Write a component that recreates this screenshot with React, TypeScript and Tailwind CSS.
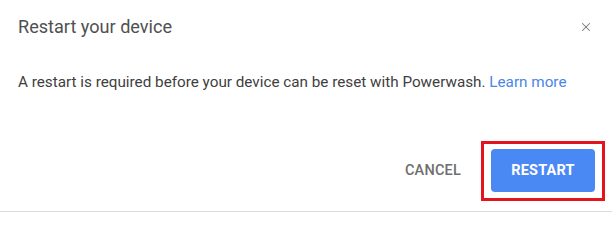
import { X } from "lucide-react";

export default function App() {
  return (
    <div className="w-[612px] h-[212px] bg-white flex flex-col border-b border-[#dcdcdc] font-['Roboto',_'Liberation_Sans',_sans-serif]">
      {/* Header */}
      <div className="flex items-center justify-between pl-[18px] pr-[19px] pt-[16px] h-[38px]">
        <h1 className="text-[18.1px] leading-5 text-[#505050]">Restart your device</h1>
        <X className="w-[14px] h-[14px] text-[#777777]" strokeWidth={1.8} />
      </div>

      {/* Body */}
      <p className="mt-[34px] pl-[18px] text-[15.25px] leading-5 text-[#404040]">
        A restart is required before your device can be reset with Powerwash.{" "}
        <span className="text-[#4a85e8]">Learn more</span>
      </p>

      {/* Footer */}
      <div className="mt-auto mb-[10px] flex items-center justify-end pr-[7px]">
        <button className="text-[14.5px] font-medium tracking-[0.2px] text-[#6e6e6e] mr-[20px]">
          CANCEL
        </button>
        <div className="border-[3px] border-[#e3141e] px-[7px] pt-[5px] pb-[6px]">
          <button className="w-[104px] h-[43px] rounded-[4px] bg-[#4a89f3] text-white text-[14.5px] font-bold tracking-[0.2px]">
            RESTART
          </button>
        </div>
      </div>
    </div>
  );
}
